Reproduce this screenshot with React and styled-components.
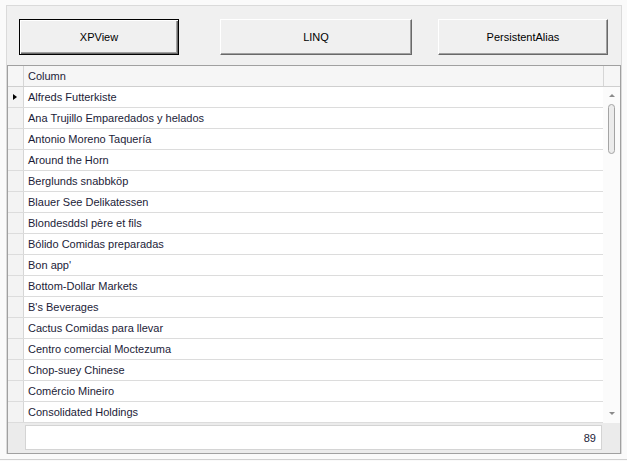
import React from 'react';
import styled, { createGlobalStyle, css } from 'styled-components';

const GlobalStyle = createGlobalStyle`
  html, body {
    margin: 0;
    padding: 0;
    background: #fafafa;
    font-family: "Liberation Sans", Arial, sans-serif;
  }
`;

const customers = [
  'Alfreds Futterkiste',
  'Ana Trujillo Emparedados y helados',
  'Antonio Moreno Taquería',
  'Around the Horn',
  'Berglunds snabbköp',
  'Blauer See Delikatessen',
  'Blondesddsl père et fils',
  'Bólido Comidas preparadas',
  "Bon app'",
  'Bottom-Dollar Markets',
  "B's Beverages",
  'Cactus Comidas para llevar',
  'Centro comercial Moctezuma',
  'Chop-suey Chinese',
  'Comércio Mineiro',
  'Consolidated Holdings',
];

const Screen = styled.div`
  width: 627px;
  height: 461px;
  padding-top: 5px;
  box-sizing: border-box;
`;

const Panel = styled.div`
  margin-left: 6px;
  width: 616px;
  box-sizing: border-box;
  background: #f0f0f0;
  border: 1px solid #dadada;
  border-bottom: none;
`;

const Toolbar = styled.div`
  display: flex;
  padding: 13px 0 10px 12px;
`;

const Button = styled.button`
  width: ${({ w }) => w}px;
  height: 36px;
  margin-right: ${({ gap }) => gap || 0}px;
  padding: 0;
  box-sizing: border-box;
  background: #f0f0f0;
  font-family: "Liberation Sans", Arial, sans-serif;
  font-size: 11px;
  color: #000;
  border: 1px solid;
  border-color: #ffffff #696969 #696969 #ffffff;
  box-shadow: inset -1px -1px #a0a0a0;
  ${({ focused }) =>
    focused &&
    css`
      border-color: #000;
      box-shadow: inset 1px 1px #ffffff, inset -1px -1px #696969, inset -2px -2px #a0a0a0;
    `}
`;

const Grid = styled.div`
  border: 1px solid #a0a0a0;
  background: #ffffff;
  color: #1c1c38;
  font-size: 11px;
`;

const HeaderRow = styled.div`
  display: flex;
  height: 21px;
  box-sizing: border-box;
  background: #f6f6f6;
  border-bottom: 1px solid #cfcfcf;
`;

const IndicatorCell = styled.div`
  width: 16px;
  flex: none;
  box-sizing: border-box;
  border-right: 1px solid #d6d6d6;
  background: ${({ header }) => (header ? '#f6f6f6' : '#f3f3f3')};
  display: flex;
  align-items: center;
  justify-content: center;
`;

const HeaderCell = styled.div`
  flex: 1;
  padding-left: 4px;
  display: flex;
  align-items: center;
`;

const ScrollCorner = styled.div`
  width: 17px;
  flex: none;
  box-sizing: border-box;
  border-left: 1px solid #d6d6d6;
`;

const Body = styled.div`
  display: flex;
`;

const Rows = styled.div`
  flex: 1;
`;

const Row = styled.div`
  display: flex;
  height: 21px;
  box-sizing: border-box;
  border-bottom: 1px solid #dcdcdc;
`;

const Cell = styled.div`
  flex: 1;
  padding-left: 4px;
  display: flex;
  align-items: center;
  white-space: nowrap;
`;

const FocusArrow = styled.span`
  width: 0;
  height: 0;
  margin-left: -1px;
  border-left: 4px solid #000;
  border-top: 3px solid transparent;
  border-bottom: 3px solid transparent;
`;

const ScrollBar = styled.div`
  width: 17px;
  flex: none;
  background: #fbfbfb;
  display: flex;
  flex-direction: column;
  align-items: center;
  padding: 7px 0 8px;
  box-sizing: border-box;
`;

const ScrollArrow = styled.span`
  width: 0;
  height: 0;
  border-left: 3px solid transparent;
  border-right: 3px solid transparent;
  ${({ down }) =>
    down
      ? css`border-top: 3px solid #8a8a8a;`
      : css`border-bottom: 3px solid #8a8a8a;`}
`;

const Thumb = styled.div`
  width: 7px;
  height: 50px;
  margin-top: 7px;
  box-sizing: border-box;
  border: 1px solid #a4a4a4;
  border-radius: 4px;
  background: #ececec;
`;

const Spacer = styled.div`
  flex: 1;
`;

const Footer = styled.div`
  height: 30px;
  background: #ebebeb;
  padding: 2px 18px 0 17px;
  box-sizing: border-box;
`;

const FooterCell = styled.div`
  height: 25px;
  box-sizing: border-box;
  background: #ffffff;
  border: 1px solid #d4d4d4;
  display: flex;
  align-items: center;
  justify-content: flex-end;
  padding-right: 5px;
`;

const BottomLine = styled.div`
  margin-top: 5px;
  border-top: 1px solid #d0d0d0;
`;

const App = () => (
  <Screen>
    <GlobalStyle />
    <Panel>
      <Toolbar>
        <Button w={160} gap={41} focused>
          XPView
        </Button>
        <Button w={192} gap={26}>
          LINQ
        </Button>
        <Button w={170}>PersistentAlias</Button>
      </Toolbar>
      <Grid>
        <HeaderRow>
          <IndicatorCell header />
          <HeaderCell>Column</HeaderCell>
          <ScrollCorner />
        </HeaderRow>
        <Body>
          <Rows>
            {customers.map((name, i) => (
              <Row key={name}>
                <IndicatorCell>{i === 0 && <FocusArrow />}</IndicatorCell>
                <Cell>{name}</Cell>
              </Row>
            ))}
          </Rows>
          <ScrollBar>
            <ScrollArrow />
            <Thumb />
            <Spacer />
            <ScrollArrow down />
          </ScrollBar>
        </Body>
        <Footer>
          <FooterCell>89</FooterCell>
        </Footer>
      </Grid>
    </Panel>
    <BottomLine />
  </Screen>
);

export default App;
